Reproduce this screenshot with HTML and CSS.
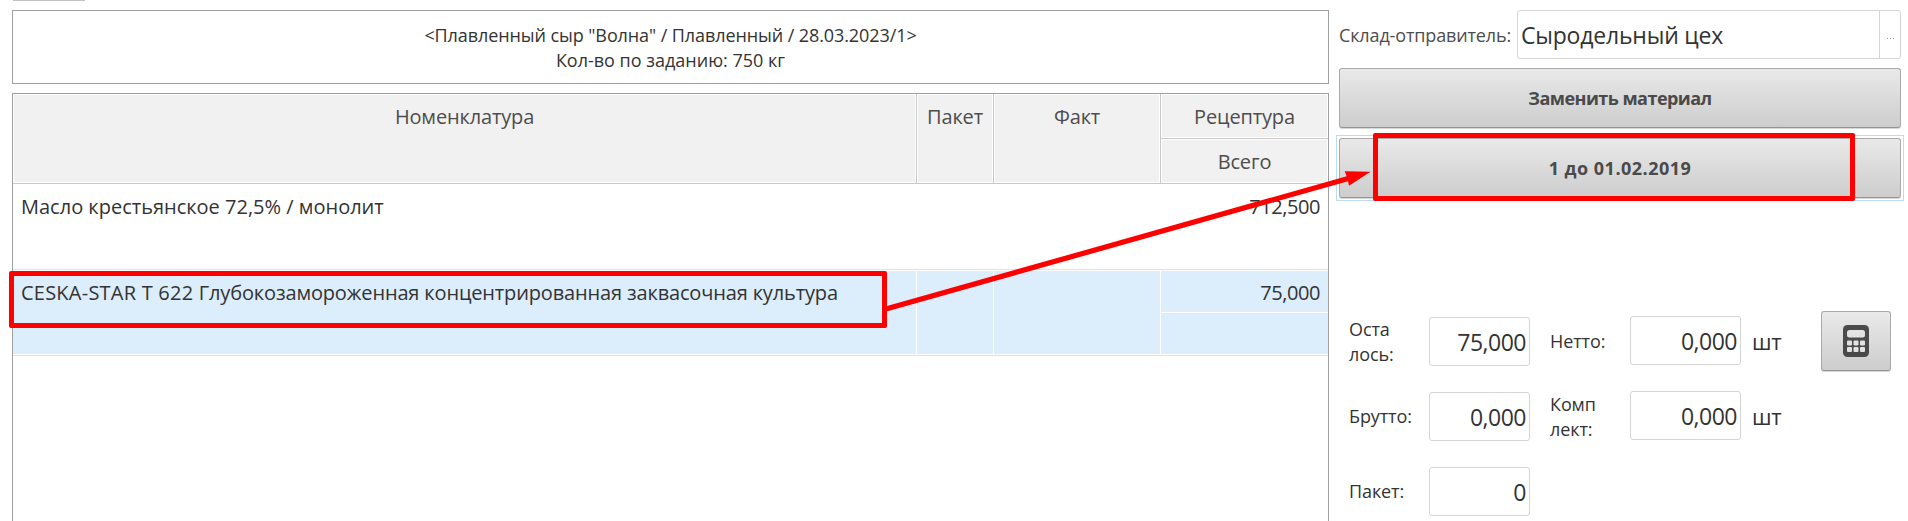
FILE: index.html
```html
<!DOCTYPE html>
<html lang="ru">
<head>
<meta charset="utf-8">
<title>Замена материала</title>
<link rel="stylesheet" href="styles.css">
</head>
<body>
<main class="screen">
  <div class="tab-edge"></div>
  <section class="left">
    <div class="task">
      <div><span class="t-task1">&lt;Плавленный сыр "Волна" / Плавленный / 28.03.2023/1&gt;</span></div>
      <div><span class="t-task2">Кол-во по заданию: 750 кг</span></div>
    </div>
    <div class="table">
      <div class="thead">
        <div class="th tall"><span class="t-head">Номенклатура</span></div>
        <div class="th tall"><span class="t-head">Пакет</span></div>
        <div class="th tall"><span class="t-head">Факт</span></div>
        <div class="th last"><span class="t-head">Рецептура</span></div>
        <div class="th last"><span class="t-head">Всего</span></div>
      </div>
      <div class="row">
        <div class="td name"><span class="t-row1">Масло крестьянское 72,5% / монолит</span></div>
        <div class="td"></div>
        <div class="td"></div>
        <div class="td last"><span class="t-num">712,500</span></div>
      </div>
      <div class="row selected">
        <div class="td name"><span class="t-code">CESKA-STAR T 622 </span><span class="t-row2">Глубокозамороженная концентрированная заквасочная культура</span></div>
        <div class="td"></div>
        <div class="td"></div>
        <div class="td last split"><div class="half"><span class="t-num">75,000</span></div></div>
      </div>
    </div>
  </section>
  <aside class="right">
    <div class="sender">
      <label class="sender-label"><span class="t-sender">Склад-отправитель:</span></label>
      <div class="combo"><div class="combo-text"><span class="t-combo">Сыродельный цех</span></div><div class="combo-more"><i></i><i></i><i></i></div></div>
    </div>
    <button class="btn"><span class="t-btn1">Заменить материал</span></button>
    <button class="btn focused"><span class="t-btn2">1 до 01.02.2019</span></button>
    <div class="weights">
      <div class="col-label">
        <div class="lab two"><span class="t-lab">Оста<br>лось:</span></div>
        <div class="lab"><span class="t-lab">Брутто:</span></div>
        <div class="lab"><span class="t-lab">Пакет:</span></div>
      </div>
      <div class="col-field">
        <div class="field"><span class="t-val">75,000</span></div>
        <div class="field"><span class="t-val">0,000</span></div>
        <div class="field"><span class="t-val">0</span></div>
      </div>
      <div class="col-label second">
        <div class="lab"><span class="t-lab">Нетто:</span></div>
        <div class="lab two"><span class="t-lab">Комп<br>лект:</span></div>
      </div>
      <div class="col-field wide">
        <div class="field"><span class="t-val">0,000</span></div>
        <div class="field"><span class="t-val">0,000</span></div>
      </div>
      <div class="col-unit">
        <div class="unit"><span class="t-unit">шт</span></div>
        <div class="unit"><span class="t-unit">шт</span></div>
      </div>
      <button class="btn calc" aria-label="Калькулятор">
        <svg width="26" height="32" viewBox="0 0 26 32">
          <rect width="26" height="32" rx="4.5" fill="#4a4a4a"/>
          <g fill="#e2e2e2">
            <rect x="4" y="5" width="18" height="7.5" rx="2.5"/>
            <rect x="4" y="15.5" width="5" height="5" rx="1"/><rect x="10.5" y="15.5" width="5" height="5" rx="1"/><rect x="17" y="15.5" width="5" height="5" rx="1"/>
            <rect x="4" y="22" width="5" height="5" rx="1"/><rect x="10.5" y="22" width="5" height="5" rx="1"/><rect x="17" y="22" width="5" height="5" rx="1"/>
          </g>
        </svg>
      </button>
    </div>
  </aside>
  <div class="mark mark-row"></div>
  <div class="mark mark-button"></div>
  <svg class="arrow" width="1908" height="521" viewBox="0 0 1908 521">
    <path d="M885 309.3L1350 178" stroke="#f00" stroke-width="5.2" fill="none"/>
    <path d="M1344.7 171.3L1370.5 171.8L1349 185.7L1347.5 178.5Z" fill="#f00"/>
  </svg>
</main>
</body>
</html>
```
FILE: styles.css
```css
* { box-sizing: border-box; }
body {
  margin: 0;
  background: #fff;
  color: #333;
  font-family: "Open Sans", "Noto Sans", sans-serif;
}
.screen {
  position: relative;
  display: flex;
  width: 1908px;
  height: 521px;
  overflow: hidden;
  padding: 10px 0 0 12px;
}
.screen span { white-space: pre; }
.t-task1 { letter-spacing: -0.09px; }
.t-head { letter-spacing: -0.15px; }
.t-code { letter-spacing: 0.23px; }
.t-row2 { letter-spacing: -0.15px; }
.t-num { letter-spacing: -0.42px; }
.t-sender { letter-spacing: -0.14px; }
.t-combo { letter-spacing: -0.2px; }
.t-btn1 { letter-spacing: -0.53px; }
.t-btn2 { letter-spacing: 0.49px; }
.t-lab { letter-spacing: -0.1px; }
.t-val { letter-spacing: -0.5px; }
.t-unit { letter-spacing: -0.4px; }
.tab-edge {
  position: absolute;
  left: 13px;
  top: 0;
  width: 72px;
  height: 1px;
  background: #c2c2c2;
}
.left { width: 1317px; flex: none; }
.task {
  height: 74px;
  border: 1px solid #a0a0a0;
  padding-top: 12px;
  text-align: center;
  font-size: 18px;
  line-height: 25px;
}
.table {
  margin-top: 9px;
  height: 440px;
  border: 1px solid #a0a0a0;
  font-size: 20px;
}
.thead, .row {
  display: grid;
  grid-template-columns: 904px 77px 167px 167px;
}
.thead { grid-template-rows: 45px 45px; color: #4d4d4d; }
.th {
  border-right: 1px solid #c8c8c8;
  border-bottom: 1px solid #c8c8c8;
  background: #f1f1f1;
  box-shadow: inset 0 0 0 1px #fff;
  text-align: center;
  line-height: 46px;
}
.th.tall { grid-row: 1 / span 2; }
.th.last { grid-column: 4; border-right: 0; }
.row { height: 86px; border-bottom: 1px solid #e3e3e3; line-height: 28px; }
.td { border-right: 1px solid transparent; padding-top: 9px; }
.td.name { padding-left: 8px; }
.td.last { border-right: 0; text-align: right; padding-right: 8px; }
.selected { padding: 1px 0; }
.selected .td { background: #dcedfc; border-color: #fff; }
.selected .name { padding-top: 8px; }
.selected .td.split { padding: 0; }
.half { height: 42px; padding: 8px 8px 0 0; border-bottom: 1px solid #fff; }

.right { margin-left: 10px; width: 562px; flex: none; }
.sender { display: flex; height: 49px; }
.sender-label { width: 178px; font-size: 18px; line-height: 51px; color: #4d4d4d; }
.combo {
  display: flex;
  width: 384px;
  border: 1px solid #d4d4d4;
  border-radius: 3px;
}
.combo-text { width: 361px; padding-left: 3px; font-size: 23px; line-height: 48px; }
.combo-more {
  flex: 1;
  display: flex;
  justify-content: center;
  align-items: center;
  gap: 2px;
  padding-top: 7px;
  border-left: 1px solid #d4d4d4;
}
.combo-more i { width: 1px; height: 1px; background: #999; }
.btn {
  display: flex;
  align-items: center;
  justify-content: center;
  width: 562px;
  height: 60px;
  margin: 9px 0 0;
  padding: 0;
  border: 1px solid #aaa;
  border-bottom-color: #959595;
  border-radius: 3px;
  background: linear-gradient(#e9e9e9, #cdcdcd);
  box-shadow: 0 1px 0 #d8d8d8;
  color: #4a4a4a;
  font: bold 18px/24px "Open Sans", "Noto Sans", sans-serif;
}
.btn.focused { position: relative; margin-top: 10px; }
.btn.focused::after {
  content: "";
  position: absolute;
  inset: -4px;
  border: 1px solid #bcdcf5;
}
.weights { display: flex; height: 210px; margin-top: 113px; padding-left: 10px; }
.col-label { width: 80px; padding-top: 6px; font-size: 18px; }
.col-label.second { width: 80px; }
.lab { height: 75px; line-height: 49px; }
.lab.two { line-height: 25px; }
.col-field { display: flex; flex-direction: column; gap: 26px; width: 101px; padding-top: 6px; margin-right: 20px; }
.col-field.wide { width: 111px; padding-top: 5px; margin-right: 11px; }
.field {
  flex: none;
  height: 49px;
  border: 1px solid #d4d4d4;
  border-radius: 3px;
  padding-right: 3px;
  text-align: right;
  font-size: 23px;
  line-height: 48px;
}
.col-unit { width: 69px; padding-top: 5px; font-size: 22px; }
.unit { height: 75px; line-height: 51px; }
.calc { width: 70px; margin: 0; }

.mark { position: absolute; border: 5px solid #f00; border-radius: 2px; }
.mark-row { left: 9px; top: 271px; width: 878px; height: 57px; }
.mark-button { left: 1373px; top: 133px; width: 482px; height: 68px; }
.arrow { position: absolute; left: 0; top: 0; }
```
